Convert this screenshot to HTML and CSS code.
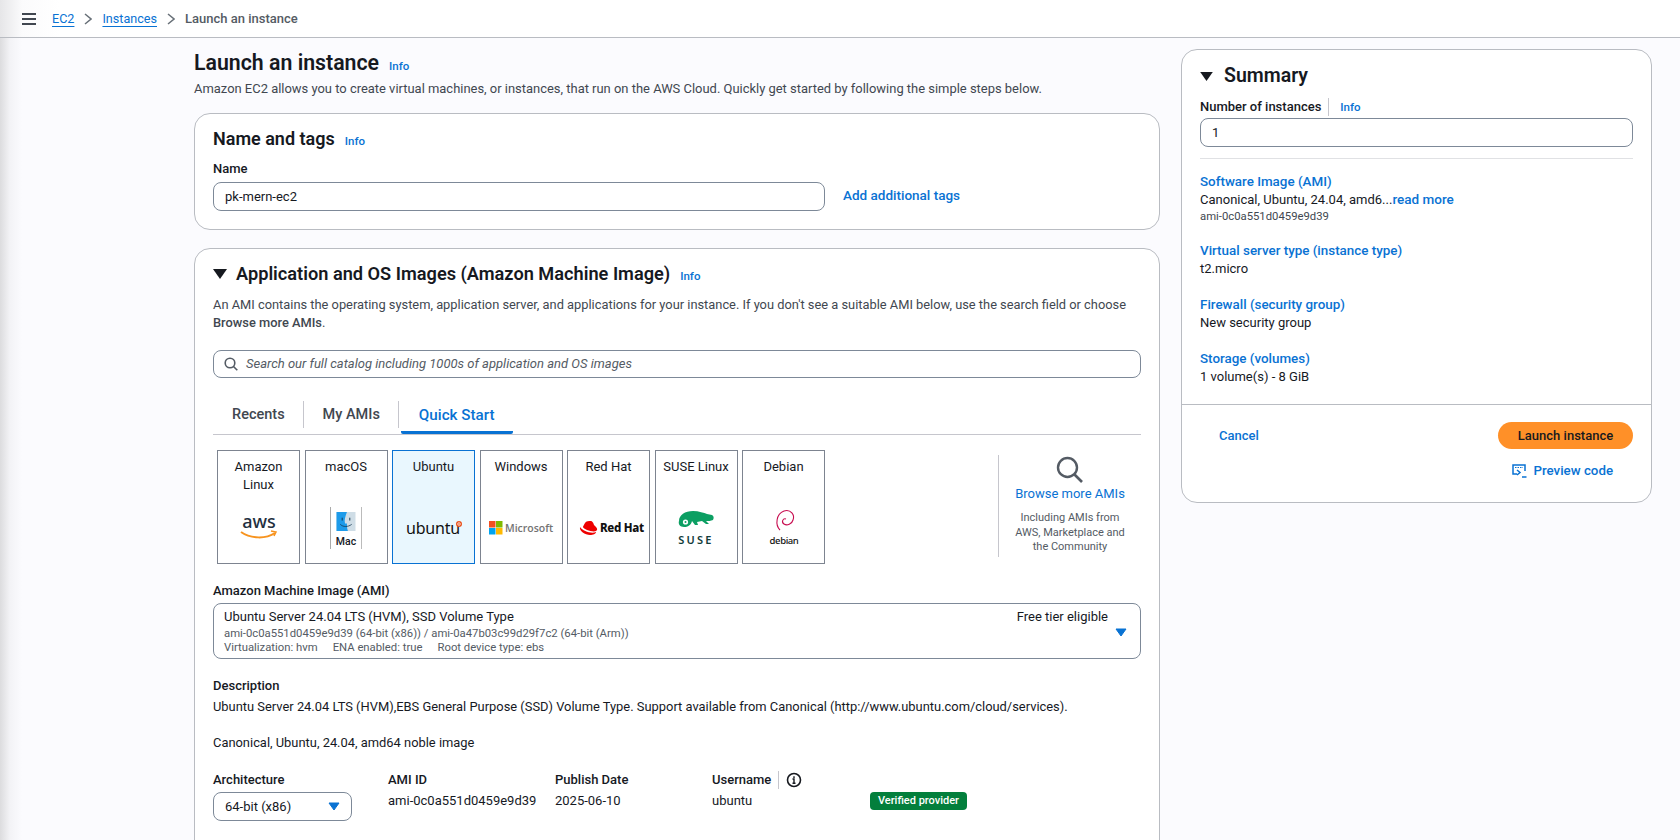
FILE: index.html
```html
<!DOCTYPE html>
<html lang="en">
<head>
<meta charset="utf-8">
<title>Launch an instance</title>
<link rel="stylesheet" href="styles.css">
</head>
<body>
<header class="topbar">
  <svg class="menu" width="14" height="12" viewBox="0 0 14 12"><path d="M0 1h14M0 6h14M0 11h14" stroke="#414750" stroke-width="2" fill="none"/></svg>
  <a class="crumb">EC2</a>
  <svg class="chev" width="8" height="12" viewBox="0 0 8 12"><path d="M1 1l6 5-6 5" stroke="#687078" stroke-width="1.5" fill="none"/></svg>
  <a class="crumb">Instances</a>
  <svg class="chev" width="8" height="12" viewBox="0 0 8 12"><path d="M1 1l6 5-6 5" stroke="#687078" stroke-width="1.5" fill="none"/></svg>
  <span class="crumb-current">Launch an instance</span>
</header>
<main class="page">
  <section class="left">
    <div class="title-row"><h1>Launch an instance</h1><a class="info">Info</a></div>
    <p class="lead">Amazon EC2 allows you to create virtual machines, or instances, that run on the AWS Cloud. Quickly get started by following the simple steps below.</p>

    <div class="card name-card">
      <div class="card-head"><h2>Name and tags</h2><a class="info">Info</a></div>
      <div class="label name-label">Name</div>
      <div class="name-row">
        <div class="input name-input">pk-mern-ec2</div>
        <a class="add-tags">Add additional tags</a>
      </div>
    </div>

    <div class="card ami-card">
      <div class="card-head ami-head">
        <svg class="tri" width="14" height="10" viewBox="0 0 14 10"><path d="M0 0h14L7 10z" fill="#16191f"/></svg>
        <h2>Application and OS Images (Amazon Machine Image)</h2><a class="info">Info</a>
      </div>
      <p class="ami-desc">An AMI contains the operating system, application server, and applications for your instance. If you don't see a suitable AMI below, use the search field or choose <b>Browse more AMIs</b>.</p>
      <div class="search">
        <svg width="14" height="14" viewBox="0 0 14 14"><circle cx="6" cy="6" r="4.8" fill="none" stroke="#545b64" stroke-width="1.6"/><path d="M9.5 9.5L13.3 13.3" stroke="#545b64" stroke-width="1.6"/></svg>
        <span>Search our full catalog including 1000s of application and OS images</span>
      </div>
      <nav class="tabs">
        <span class="tab tab-recents">Recents</span>
        <span class="tab tab-my">My AMIs</span>
        <span class="tab tab-active">Quick Start</span>
      </nav>
      <div class="os-row">
        <div class="tiles">
          <div class="tile"><div class="tile-name">Amazon Linux</div><div class="logo">
            <svg width="40" height="40" viewBox="0 0 40 40"><text x="20" y="20" text-anchor="middle" class="aws-t">aws</text><path d="M2 24c10 7 25 7 34 1" stroke="#f7931e" stroke-width="2" fill="none"/><path d="M32 23l5 1-2 4" stroke="#f7931e" stroke-width="1.5" fill="none"/></svg>
          </div></div>
          <div class="tile"><div class="tile-name">macOS</div><div class="logo">
            <div class="mac"><svg width="20" height="20" viewBox="0 0 20 20"><rect width="20" height="20" fill="#cfdde6"/><path d="M0 0h11c-2 5-3 9-2 12h2c0 3 0 5 1 8H0z" fill="#1d9bea"/><path d="M4 13c3 3 8 3 12 0" fill="none" stroke="#12344d" stroke-width=".8"/><path d="M6 6v3M14 6v3" stroke="#12344d" stroke-width="1"/></svg><span>Mac</span></div>
          </div></div>
          <div class="tile tile-on"><div class="tile-name">Ubuntu</div><div class="logo">
            <svg width="60" height="22" viewBox="0 0 60 22"><text x="2" y="17" class="ubuntu-t">ubuntu</text><circle cx="55" cy="7" r="3" fill="#e95420"/><circle cx="55" cy="7" r="1.3" fill="none" stroke="#fff" stroke-width=".7"/></svg>
          </div></div>
          <div class="tile"><div class="tile-name">Windows</div><div class="logo">
            <svg width="68" height="18" viewBox="0 0 68 18"><rect x="2" y="2" width="6.5" height="6.5" fill="#f25022"/><rect x="9" y="2" width="6.5" height="6.5" fill="#7fba00"/><rect x="2" y="9" width="6.5" height="6.5" fill="#00a4ef"/><rect x="9" y="9" width="6.5" height="6.5" fill="#ffb900"/><text x="18" y="13" class="ms-t">Microsoft</text></svg>
          </div></div>
          <div class="tile"><div class="tile-name">Red Hat</div><div class="logo">
            <svg width="76" height="20" viewBox="0 0 76 20"><g transform="translate(8)"><path d="M6 5c1-2 4-2 6-2 1 0 2 1 3 4l2 2c1 1 2 3 0 4-2 1-6 0-9-1-2-1-4-2-4-3 0-1 1-2 2-4z" fill="#e00"/><path d="M1 9c3 4 11 7 16 5 0 2-3 3-6 3C6 17 0 13 1 9z" fill="#e00"/></g><text x="29" y="14" class="rh-t">Red Hat</text></svg>
          </div></div>
          <div class="tile"><div class="tile-name">SUSE Linux</div><div class="logo">
            <svg width="40" height="38" viewBox="0 0 40 38"><g transform="translate(1)"><path d="M2 12C2 6 8 2 16 2c6 0 11 2 14 3l5 1c2 1 2 3 1 5-2 1-5 1-7 1l3 3h-3l-4-3-5 1 1 3h-3l-3-4c-1 4-4 6-8 6-4 0-6-3-5-6z" fill="#0c9f63"/><circle cx="8.500" cy="13" r="2.600" fill="#fff"/><circle cx="8.500" cy="13" r="1" fill="#0c9f63"/></g><text x="20" y="35" text-anchor="middle" class="suse-t">SUSE</text></svg>
          </div></div>
          <div class="tile"><div class="tile-name">Debian</div><div class="logo">
            <svg width="32" height="40" viewBox="0 0 32 40"><path d="M12 22C7 17 8 6 16 3c7-2 11 4 9 9-1 4-6 6-9 4-3-2-1-6 2-5" fill="none" stroke="#c70a4e" stroke-width="1.100"/><text x="16" y="36" text-anchor="middle" class="deb-t">debian</text></svg>
          </div></div>
        </div>
        <aside class="browse">
          <svg width="28" height="28" viewBox="0 0 28 28"><circle cx="11.500" cy="11.500" r="9.500" fill="none" stroke="#545b64" stroke-width="2.400"/><path d="M18.500 18.500L26 26" stroke="#545b64" stroke-width="2.600"/></svg>
          <a class="browse-link">Browse more AMIs</a>
          <p>Including AMIs from AWS, Marketplace and the Community</p>
        </aside>
      </div>
      <div class="label ami-label">Amazon Machine Image (AMI)</div>
      <div class="ami-select">
        <div class="ami-top"><span>Ubuntu Server 24.04 LTS (HVM), SSD Volume Type</span><span>Free tier eligible</span></div>
        <div class="ami-line">ami-0c0a551d0459e9d39 (64-bit (x86)) / ami-0a47b03c99d29f7c2 (64-bit (Arm))</div>
        <div class="ami-line ami-tags"><span>Virtualization: hvm</span><span>ENA enabled: true</span><span>Root device type: ebs</span></div>
        <svg class="caret ami-caret" width="12" height="9" viewBox="0 0 12 9"><path d="M1 1h10L6 8z" fill="#0972d3" stroke="#0972d3"/></svg>
      </div>
      <div class="label desc-label">Description</div>
      <p class="desc-text">Ubuntu Server 24.04 LTS (HVM),EBS General Purpose (SSD) Volume Type. Support available from Canonical (http://www.ubuntu.com/cloud/services).</p>
      <p class="desc-text desc-two">Canonical, Ubuntu, 24.04, amd64 noble image</p>
      <div class="meta">
        <div class="meta-arch"><div class="label">Architecture</div>
          <div class="arch-select"><span>64-bit (x86)</span><svg class="caret" width="12" height="9" viewBox="0 0 12 9"><path d="M1 1h10L6 8z" fill="#0972d3" stroke="#0972d3"/></svg></div></div>
        <div class="meta-id"><div class="label">AMI ID</div><div class="val">ami-0c0a551d0459e9d39</div></div>
        <div class="meta-date"><div class="label">Publish Date</div><div class="val">2025-06-10</div></div>
        <div class="meta-user"><div class="label user-label">Username<i class="vsep"></i><svg width="16" height="16" viewBox="0 0 16 16"><circle cx="8" cy="8" r="6.500" fill="none" stroke="#16191f" stroke-width="1.600"/><path d="M6.500 7H8v4M6.500 11.200h3M8 4.300v1.600" fill="none" stroke="#16191f" stroke-width="1.400"/></svg></div><div class="val">ubuntu</div></div>
        <div class="badge">Verified provider</div>
      </div>
    </div>
  </section>

  <aside class="summary card">
    <div class="sum-body">
      <div class="sum-head"><svg class="tri" width="13" height="9" viewBox="0 0 14 10"><path d="M0 0h14L7 10z" fill="#16191f"/></svg><h2>Summary</h2></div>
      <div class="label num-label">Number of instances<i class="vsep"></i><a class="info">Info</a></div>
      <div class="input num-input">1</div>
      <hr class="thin">
      <a class="sum-link first">Software Image (AMI)</a>
      <div class="sum-val">Canonical, Ubuntu, 24.04, amd6...<a class="more">read more</a></div>
      <div class="sum-sub">ami-0c0a551d0459e9d39</div>
      <a class="sum-link">Virtual server type (instance type)</a>
      <div class="sum-val">t2.micro</div>
      <a class="sum-link">Firewall (security group)</a>
      <div class="sum-val">New security group</div>
      <a class="sum-link">Storage (volumes)</a>
      <div class="sum-val">1 volume(s) - 8 GiB</div>
    </div>
    <div class="sum-foot">
      <div class="foot-row"><a class="cancel">Cancel</a><span class="launch">Launch instance</span></div>
      <a class="preview"><svg width="15" height="14" viewBox="0 0 15 14"><path d="M5 10H1V1h12v6" fill="none" stroke="#0972d3" stroke-width="1.500"/><path d="M3 3.500h8" stroke="#0972d3" stroke-width="1.200" stroke-dasharray="1.500 1"/><path d="M5 6l3 2.500L5 11" fill="none" stroke="#0972d3" stroke-width="1.500"/><path d="M10 13h4.500" stroke="#0972d3" stroke-width="1.500"/></svg>Preview code</a>
    </div>
  </aside>
</main>
</body>
</html>
```
FILE: styles.css
```css
* { box-sizing: border-box; }
html, body { margin: 0; height: 840px; overflow: hidden; }
body {
  background: linear-gradient(90deg, #dcdcde 0, #f3f3f6 10px, #fbfbfe 22px) #fbfbfe;
  font: 13px/18px Roboto, sans-serif;
  color: #16191f;
}
p { margin: 0; }
h1, h2 { margin: 0; font-weight: 600; }
a { color: #0972d3; }

.topbar {
  height: 38px;
  display: flex;
  align-items: center;
  padding-left: 22px;
  background: linear-gradient(90deg, #e6e6e8 0, #fbfbfc 22px, #fff 60px);
  border-bottom: 1px solid #b9bcc2;
}
.menu { margin-right: 16px; }
.crumb { color: #0972d3; font-size: 12.600px; text-decoration: underline; text-underline-offset: 3px; }
.chev { margin: 0 10px; }
.crumb-current { color: #545b64; font-weight: 500; }

.page { display: flex; align-items: flex-start; gap: 21px; padding-left: 194px; }
.left { width: 966px; flex: none; }

.title-row { display: flex; align-items: baseline; gap: 10px; margin-top: 12px; }
h1 { font-size: 21.300px; line-height: 26px; }
.info { font-size: 11.500px; font-weight: 500; color: #0972d3; }
.lead { color: #414750; font-size: 12.950px; margin-top: 4px; }

.card { background: #fff; border: 1px solid #b9bcc2; border-radius: 16px; }
.name-card { margin-top: 15px; height: 117px; padding: 13px 18px 0; }
.card-head { display: flex; align-items: baseline; gap: 10px; }
.card-head h2 { font-size: 18px; line-height: 24px; }
.label { font-weight: 500; font-size: 13px; line-height: 18px; }
.name-label { margin-top: 9px; }
.name-row { display: flex; align-items: center; gap: 18px; margin-top: 4px; }
.input { border: 1px solid #7d8998; border-radius: 8px; height: 29px; padding: 0 11px; line-height: 27px; background: #fff; }
.name-input { width: 612px; }
.add-tags { font-weight: 500; font-size: 13.500px; margin-bottom: 4px; }

.ami-card { margin-top: 18px; height: 800px; padding: 13px 18px 0; border-bottom-left-radius: 0; border-bottom-right-radius: 0; }
.ami-head { gap: 0; }
.ami-head h2 { font-size: 18.200px; }
.ami-head .tri { margin-right: 9px; align-self: center; }
.ami-head .info { margin-left: 10px; }
.ami-desc { margin-top: 10px; font-size: 12.850px; color: #414750; }
.ami-desc b { font-weight: 500; }

.search { display: flex; align-items: center; gap: 8px; height: 28px; margin-top: 18px; padding-left: 10px; border: 1px solid #7d8998; border-radius: 8px; }
.search span { font-style: italic; color: #545b64; }

.tabs { display: flex; height: 38px; margin-top: 19px; border-bottom: 1px solid #c6c6cd; position: relative; }
.tab { font-weight: 500; color: #414750; display: flex; align-items: center; height: 27px; font-size: 14.500px; margin-top: 4px; }
.tab-recents { padding: 0 18px 0 19px; border-right: 1px solid #c6c6cd; }
.tab-my { padding: 0 18px 0 19px; border-right: 1px solid #c6c6cd; }
.tab-active { color: #0972d3; font-size: 15.200px; padding: 0 18px 3px 18px; margin-left: 2px; height: 33px; margin-top: 4px; border-bottom: 3px solid #0972d3; border-radius: 0 0 2px 2px; }

.os-row { display: flex; justify-content: space-between; margin-top: 15px; padding-left: 4px; height: 114px; }
.tiles { display: flex; gap: 4.500px; }
.tile { width: 83px; height: 114px; border: 1px solid #7d8490; display: flex; flex-direction: column; align-items: center; padding: 7px 4px 10px; text-align: center; position: relative; }
.tile-on { border-color: #0972d3; background: #e9f7fe; }
.tile-name { line-height: 18px; }
.logo { position: absolute; left: 0; right: 0; bottom: 11px; height: 48px; display: flex; align-items: center; justify-content: center; }
.aws-t { font: 500 18px "Noto Sans", sans-serif; fill: #232f3e; }
.ubuntu-t { font: 400 16px "Noto Sans", sans-serif; fill: #111; letter-spacing: -.2px; }
.ms-t { font: 600 10.500px "Open Sans", sans-serif; fill: #737373; }
.rh-t { font: 800 11.500px "Noto Sans", sans-serif; fill: #111; letter-spacing: -.3px; }
.suse-t { font: 600 11px "Noto Sans", sans-serif; fill: #123c3a; letter-spacing: 2.200px; }
.deb-t { font: 500 9.500px "Liberation Sans Narrow", "Noto Sans", sans-serif; fill: #111; letter-spacing: -.4px; }
.mac { width: 32px; height: 42px; border-left: 1px solid #aaa; border-right: 1px solid #bbb; display: flex; flex-direction: column; align-items: center; padding-top: 5px; }
.mac span { font-size: 10.500px; line-height: 14px; font-weight: 500; margin-top: 4px; }

.browse { width: 143px; margin-top: 5px; height: 102px; border-left: 1px solid #c6c6cd; display: flex; flex-direction: column; align-items: center; text-align: center; padding-top: 1px; }
.browse-link { margin-top: 1px; }
.browse p { color: #545b64; font-size: 11px; line-height: 14.500px; margin-top: 8px; width: 118px; }

.ami-label { margin-top: 18px; }
.ami-select { position: relative; height: 56px; margin-top: 3px; padding: 3px 10px; border: 1px solid #7d8998; border-radius: 8px; }
.ami-top { display: flex; justify-content: space-between; padding-right: 22px; line-height: 19px; }
.ami-line { font-size: 11.300px; line-height: 14px; color: #545b64; margin-top: 1px; }
.ami-tags { display: flex; gap: 15px; margin-top: 0; }
.ami-caret { position: absolute; right: 13px; top: 24px; }

.desc-label { margin-top: 18px; }
.desc-text { margin-top: 3px; font-size: 12.900px; }
.desc-two { margin-top: 18px; }

.meta { display: flex; align-items: flex-start; margin-top: 19px; position: relative; }
.meta-arch { width: 175px; }
.meta-id { width: 167px; }
.meta-date { width: 157px; }
.meta-user { width: 158px; }
.val { margin-top: 3px; }
.arch-select { display: flex; justify-content: space-between; align-items: center; width: 139px; height: 29px; margin-top: 3px; padding: 0 11px; border: 1px solid #7d8998; border-radius: 8px; }
.user-label { display: flex; align-items: center; }
.vsep { display: inline-block; width: 1px; height: 18px; background: #c6c6cd; margin: 0 7px; }
.badge { margin-top: 21px; width: 97px; height: 18px; background: #037f3c; color: #fff; border-radius: 4px; font-size: 11px; line-height: 18px; font-weight: 500; text-align: center; }

.summary { width: 471px; height: 454px; margin-top: 11px; flex: none; }
.sum-body { padding: 13px 18px 0; height: 355px; border-bottom: 1px solid #b9bcc2; }
.sum-head { display: flex; align-items: center; gap: 11px; height: 26px; }
.sum-head h2 { font-size: 19.500px; }
.num-label { display: flex; align-items: center; margin-top: 9px; }
.num-label .info { margin-left: 4px; }
.num-input { margin-top: 2px; }
.thin { border: 0; border-top: 1px solid #e0e1e4; margin: 11px 0 0; }
.sum-link { display: block; font-weight: 500; font-size: 13.400px; color: #0972d3; margin-top: 18px; }
.sum-link.first { margin-top: 14px; margin-bottom: -1px; }
.more { font-weight: 500; font-size: 13.500px; }
.sum-sub { font-size: 11.300px; line-height: 15px; color: #414750; }
.sum-foot { padding: 17px 18px 0; }
.foot-row { display: flex; justify-content: space-between; align-items: center; padding-left: 19px; }
.cancel { font-weight: 500; }
.launch { width: 135px; height: 27px; line-height: 27px; border-radius: 14px; background: #ff9028; font-weight: 500; text-align: center; }
.preview { display: flex; align-items: center; justify-content: flex-end; gap: 7px; padding-right: 20px; margin-top: 13px; font-weight: 500; font-size: 13.300px; }
```
